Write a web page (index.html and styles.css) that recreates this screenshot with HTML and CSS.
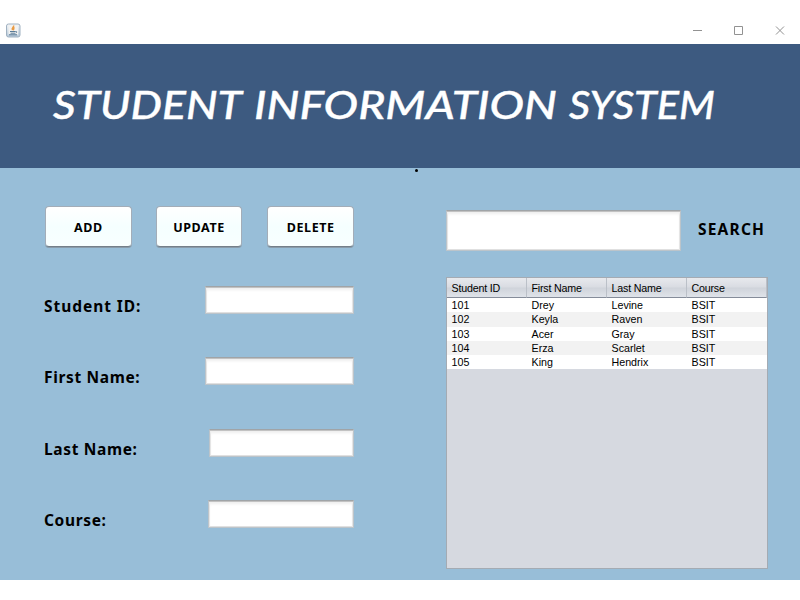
FILE: index.html
```
<!DOCTYPE html>
<html lang="en">
<head>
<meta charset="utf-8">
<title>Student Information System</title>
<link rel="stylesheet" href="styles.css">
</head>
<body>
<div class="titlebar">
  <svg class="app-icon" width="16" height="16" viewBox="0 0 16 16">
    <defs><linearGradient id="tile" x1="0" y1="0" x2="0" y2="1"><stop offset="0" stop-color="#f4f6f8"/><stop offset="1" stop-color="#b4c7d8"/></linearGradient></defs>
    <rect x="1.5" y="1" width="13.5" height="13" rx="2" fill="url(#tile)" stroke="#a0b1c1"/>
    <rect x="3.5" y="2.5" width="9.5" height="9" fill="#f3f3f2"/>
    <path d="M8.7 2.5C9 4.5 6 5 7.5 7.2M9.5 4.5C7.7 5.7 9.4 6 8.3 7.3" fill="none" stroke="#e99b45" stroke-width="1.4"/>
    <path d="M5 8.5h5.5M5.5 10.2h4.5M4 11.8h8M10.5 8.5c2-.4 1.4 1.4 0 1.7" fill="none" stroke="#597b98"/>
  </svg>
  <svg class="controls" width="96" height="12" viewBox="0 0 96 12" fill="none" stroke="#929292">
    <path d="M1 6.5h9M42.5 2.5h8v8h-8z"/>
    <path d="M84 2.5l8 8M92 2.5l-8 8"/>
  </svg>
</div>
<header class="banner">
  <svg class="heading" width="800" height="124" viewBox="0 0 800 124" role="heading">
    <text x="53" y="75" textLength="189" lengthAdjust="spacingAndGlyphs">STUDENT</text>
    <text x="254" y="75" textLength="303" lengthAdjust="spacingAndGlyphs">INFORMATION</text>
    <text x="569" y="75" textLength="146" lengthAdjust="spacingAndGlyphs">SYSTEM</text>
  </svg>
</header>
<main class="content">
  <span class="dot"></span>
  <section class="editor">
    <div class="buttons">
      <button>ADD</button>
      <button>UPDATE</button>
      <button>DELETE</button>
    </div>
    <div class="row"><label for="sid" class="sid">Student ID:</label><input id="sid" class="wide"></div>
    <div class="row"><label for="first">First Name:</label><input id="first" class="wide"></div>
    <div class="row"><label for="last">Last Name:</label><input id="last" class="narrow"></div>
    <div class="row"><label for="course">Course:</label><input id="course" class="medium"></div>
  </section>
  <section class="records">
    <div class="search"><input id="search"><label for="search">SEARCH</label></div>
    <div class="table-box">
      <table>
        <thead><tr><th>Student ID</th><th>First Name</th><th>Last Name</th><th>Course</th></tr></thead>
        <tbody>
          <tr><td>101</td><td>Drey</td><td>Levine</td><td>BSIT</td></tr>
          <tr><td>102</td><td>Keyla</td><td>Raven</td><td>BSIT</td></tr>
          <tr><td>103</td><td>Acer</td><td>Gray</td><td>BSIT</td></tr>
          <tr><td>104</td><td>Erza</td><td>Scarlet</td><td>BSIT</td></tr>
          <tr><td>105</td><td>King</td><td>Hendrix</td><td>BSIT</td></tr>
        </tbody>
      </table>
    </div>
  </section>
</main>
</body>
</html>
```
FILE: styles.css
```
* { box-sizing: border-box; }
body {
  margin: 0;
  width: 800px;
  height: 600px;
  overflow: hidden;
  background: #fff;
  color: #000;
  font-family: "Noto Sans", sans-serif;
}
.titlebar {
  height: 44px;
  padding: 23px 12px 0 5px;
  display: flex;
  justify-content: space-between;
  align-items: flex-start;
}
.controls { margin-top: 1px; }
.banner { height: 124px; background: #3d5a80; }
.heading {
  display: block;
  font: italic 500 39px Lato, sans-serif;
  fill: #fff;
  stroke: #fff;
  stroke-width: .4px;
}
.content {
  position: relative;
  height: 412px;
  display: flex;
  background: #98bed8;
}
.dot {
  position: absolute;
  left: 415px;
  top: 1px;
  width: 3px;
  height: 3px;
  border-radius: 50%;
  background: #000;
}
.editor { width: 446px; padding: 38px 92px 0 45px; }
.buttons {
  display: flex;
  gap: 24px;
  margin-bottom: 38px;
}
button {
  width: 87px;
  height: 41px;
  margin-bottom: 1px;
  padding: 1px 0 0;
  background: linear-gradient(#fff, #f5ffff 50%, #f8ffff);
  border: 1px solid #a3adb8;
  border-bottom-color: #747f89;
  border-radius: 4px;
  box-shadow: 0 1px 0 #899ba9;
  color: #000;
  font: bold 12.5px "Noto Sans", sans-serif;
  letter-spacing: .6px;
}
button:nth-child(3) { margin-left: 1px; }
.row {
  height: 71.3px;
  display: flex;
  justify-content: space-between;
  align-items: flex-start;
}
label {
  font: bold 15.5px/20px "Noto Sans", sans-serif;
  letter-spacing: .65px;
  white-space: nowrap;
}
.row label { margin: 10px 0 0 -1px; }
.row .sid { letter-spacing: .95px; }
input {
  height: 28px;
  border: 1px solid #bcc4ca;
  border-top-color: #a0a4a7;
  background: #fff;
  box-shadow: inset 0 1px 0 #c2c2c2, inset 0 3px 3px #eee, inset 0 0 0 1px #e0e0e0;
  border-radius: 0;
  padding: 0 4px;
  outline: 0;
}
.wide { width: 149px; }
.narrow { width: 145px; }
.medium { width: 146px; }
.records { width: 322px; padding-top: 42px; }
.search { display: flex; align-items: center; }
.search input { width: 235px; height: 41px; flex: none; }
.search label { margin: -3px 0 0 17px; letter-spacing: 1.2px; }
.table-box {
  margin-top: 26px;
  width: 322px;
  height: 292px;
  border: 1px solid #a4abb3;
  background: #d6d9e0;
}
table {
  width: 320px;
  table-layout: fixed;
  border-collapse: separate;
  border-spacing: 0;
  font: 10.7px/14px "Liberation Sans", sans-serif;
}
th {
  height: 20px;
  padding: 0 0 0 4.5px;
  font-weight: normal;
  letter-spacing: -.2px;
  text-align: left;
  border-right: 1px solid #bbc0c8;
  border-bottom: 1px solid #858c99;
  background: linear-gradient(#e7e9ed, #d9dce2 48%, #cfd3da 52%, #dfe3e9);
}
td { height: 14.3px; padding: 0 0 0 4.5px; background: #fff; }
tbody tr:nth-child(even) td { background: #f2f2f2; }
```
